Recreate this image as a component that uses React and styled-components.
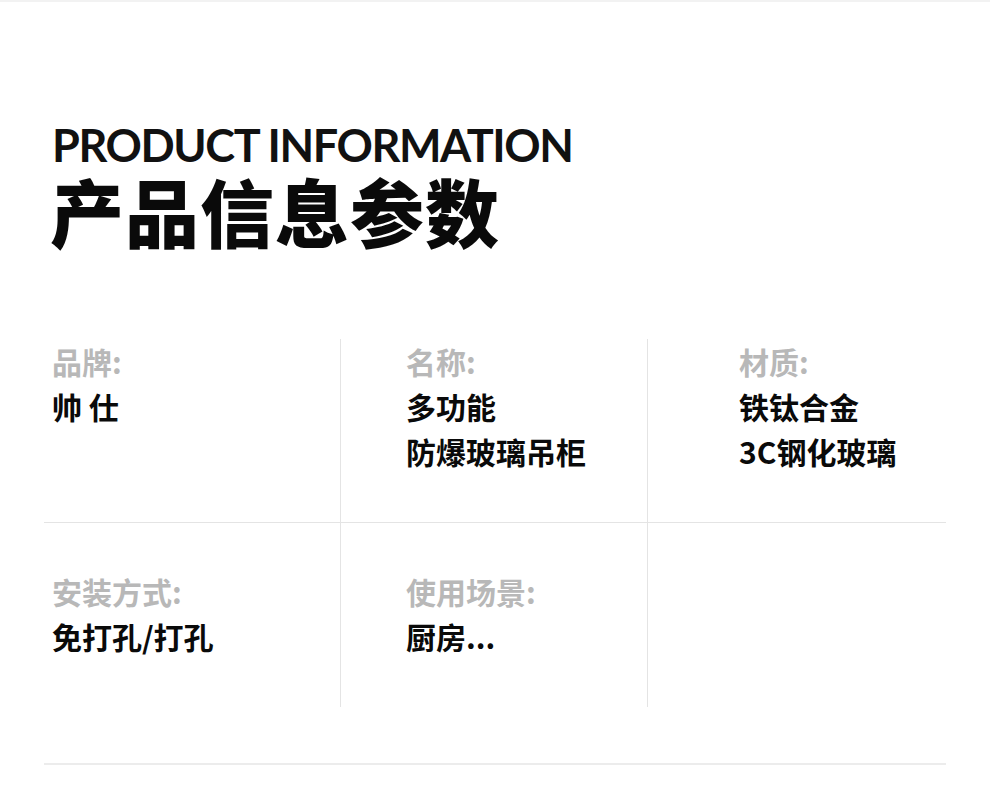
import React from "react";
import styled, { createGlobalStyle } from "styled-components";

const GlobalStyle = createGlobalStyle`
  html, body {
    margin: 0;
    padding: 0;
    background: #ffffff;
  }
  body {
    font-family: "Inter", "Noto Sans CJK SC", sans-serif;
  }
`;

const specs = [
  { label: "品牌:", lines: ["帅 仕"], pad: 8 },
  { label: "名称:", lines: ["多功能", "防爆玻璃吊柜"], pad: 65 },
  { label: "材质:", lines: ["铁钛合金", "3C钢化玻璃"], pad: 91 },
  { label: "安装方式:", lines: ["免打孔/打孔"], pad: 8 },
  { label: "使用场景:", lines: ["厨房..."], pad: 65 },
  { label: "", lines: [], pad: 91 },
];

export default function App() {
  return (
    <>
      <GlobalStyle />
      <Page>
        <Header>
          <EnTitle>PRODUCT INFORMATION</EnTitle>
          <CnTitle>产品信息参数</CnTitle>
        </Header>
        <SpecGrid>
          {specs.map((s, i) => (
            <Cell
              key={i}
              $pad={s.pad}
              $top={i < 3}
              $last={i % 3 === 2}
            >
              {s.label && <Label>{s.label}</Label>}
              {s.lines.map((l) => (
                <Value key={l}>{l}</Value>
              ))}
            </Cell>
          ))}
        </SpecGrid>
        <BottomRule />
      </Page>
    </>
  );
}

const Page = styled.div`
  width: 990px;
  height: 792px;
  overflow: hidden;
  border-top: 2px solid #f2f2f2;
  box-sizing: border-box;
`;

const Header = styled.div`
  padding: 120px 0 0 52px;
`;

const EnTitle = styled.div`
  font-family: "Lato", "Inter", sans-serif;
  font-weight: 700;
  font-size: 45px;
  line-height: 46px;
  color: #111;
  letter-spacing: -1.4px;
`;

const CnTitle = styled.div`
  font-family: "Noto Sans CJK SC", sans-serif;
  font-weight: 900;
  font-size: 74px;
  line-height: 84px;
  color: #0a0a0a;
  margin-left: -2px;
  letter-spacing: 1px;
`;

const SpecGrid = styled.div`
  display: grid;
  grid-template-columns: 297px 307px 298px;
  margin: 87px 0 0 44px;
  width: 902px;
`;

const Cell = styled.div`
  padding: ${(p) => (p.$top ? "0" : "46px")} 0 48px ${(p) => p.$pad}px;
  border-right: ${(p) => (p.$last ? "none" : "1px solid #e4e4e4")};
  border-bottom: ${(p) => (p.$top ? "1px solid #e4e4e4" : "none")};
  min-height: 90px;
`;

const Label = styled.div`
  font-family: "Noto Sans CJK SC", sans-serif;
  font-weight: 700;
  font-size: 30px;
  line-height: 45px;
  color: #b8b8b8;
`;

const Value = styled.div`
  font-family: "Noto Sans CJK SC", sans-serif;
  font-weight: 700;
  font-size: 30px;
  line-height: 45px;
  color: #0a0a0a;
`;

const BottomRule = styled.div`
  margin: 56px 0 0 44px;
  width: 902px;
  height: 2px;
  background: #ececec;
`;
